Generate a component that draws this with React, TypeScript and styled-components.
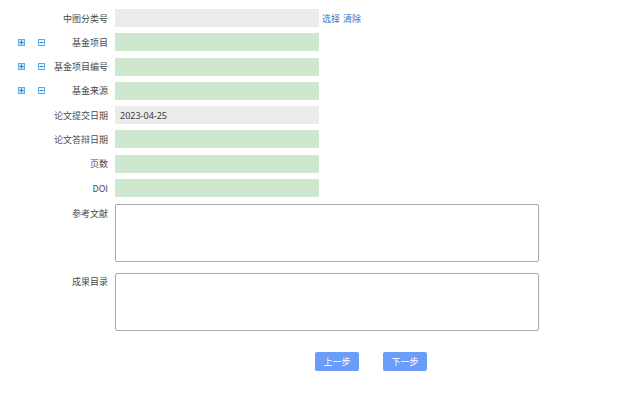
import React from "react";
import styled, { createGlobalStyle } from "styled-components";

const Global = createGlobalStyle`
  html, body { margin: 0; padding: 0; background: #fff; }
  body { font-family: "Noto Sans CJK SC", "Noto Sans", sans-serif; }
`;

const Page = styled.div`
  width: 638px;
  height: 397px;
  padding-top: 9px;
  box-sizing: border-box;
  display: flex;
  flex-direction: column;
`;

const Form = styled.div`
  display: flex;
  flex-direction: column;
  gap: 6.3px;
`;

const Row = styled.div<{ $top?: boolean; $gap?: number }>`
  display: grid;
  grid-template-columns: 108px auto;
  column-gap: 7px;
  align-items: ${(p) => (p.$top ? "start" : "center")};
  margin-top: ${(p) => p.$gap ?? 0}px;
`;

const LabelCell = styled.div`
  display: flex;
  align-items: center;
  justify-content: space-between;
  height: 18px;
`;

const Icons = styled.div`
  display: flex;
  align-items: center;
  gap: 13px;
  padding-left: 18px;
`;

const Label = styled.span`
  margin-left: auto;
  font-size: 9px;
  color: #4a4a4a;
  white-space: nowrap;
`;

const Field = styled.div<{ $tone: "gray" | "green" }>`
  width: 204px;
  height: 18px;
  box-sizing: border-box;
  background: ${(p) => (p.$tone === "gray" ? "#ebebeb" : "#cde8cf")};
  font-size: 9px;
  color: #3a3a3a;
  display: flex;
  align-items: center;
  padding-left: 5px;
  font-family: "Noto Sans", "Noto Sans CJK SC", sans-serif;
`;

const FieldLine = styled.div`
  display: flex;
  align-items: center;
  gap: 3px;
`;

const Links = styled.div`
  display: flex;
  gap: 3px;
  font-size: 9px;
  color: #2a76c6;
`;

const Area = styled.div`
  width: 424px;
  height: 58px;
  box-sizing: border-box;
  border: 1px solid #a9a9a9;
  border-radius: 2px;
  background: #fff;
`;

const ButtonBar = styled.div`
  display: flex;
  gap: 24px;
  padding-left: 315px;
  margin-top: 21px;
`;

const Btn = styled.button`
  width: 44px;
  height: 19px;
  border: none;
  border-radius: 2px;
  background: #6a9cf9;
  color: #fff;
  font-size: 9px;
  font-family: "Noto Sans CJK SC", sans-serif;
  padding: 0;
  display: flex;
  align-items: center;
  justify-content: center;
`;

const PlusIcon = () => (
  <svg width="7" height="7" viewBox="0 0 7 7">
    <rect x="0.5" y="0.5" width="6" height="6" fill="#c6e4fc" stroke="#5aaef0" />
    <path d="M1.5 3.5h4M3.5 1.5v4" stroke="#2a7fd0" strokeWidth="1" />
  </svg>
);

const MinusIcon = () => (
  <svg width="7" height="7" viewBox="0 0 7 7">
    <rect x="0.5" y="0.5" width="6" height="6" fill="#eef7ff" stroke="#5aaef0" />
    <path d="M1.5 3.5h4" stroke="#2a7fd0" strokeWidth="1" />
  </svg>
);

type R = { label: string; tone: "gray" | "green"; icons?: boolean; value?: string; links?: boolean };

const rows: R[] = [
  { label: "中图分类号", tone: "gray", links: true },
  { label: "基金项目", tone: "green", icons: true },
  { label: "基金项目编号", tone: "green", icons: true },
  { label: "基金来源", tone: "green", icons: true },
  { label: "论文提交日期", tone: "gray", value: "2023-04-25" },
  { label: "论文答辩日期", tone: "green" },
  { label: "页数", tone: "green" },
  { label: "DOI", tone: "green" },
];

export default function App() {
  return (
    <Page>
      <Global />
      <Form>
        {rows.map((r) => (
          <Row key={r.label}>
            <LabelCell>
              {r.icons && (
                <Icons>
                  <PlusIcon />
                  <MinusIcon />
                </Icons>
              )}
              <Label>{r.label}</Label>
            </LabelCell>
            <FieldLine>
              <Field $tone={r.tone}>{r.value}</Field>
              {r.links && (
                <Links>
                  <span>选择</span>
                  <span>清除</span>
                </Links>
              )}
            </FieldLine>
          </Row>
        ))}
        <Row $top $gap={1}>
          <LabelCell>
            <Label>参考文献</Label>
          </LabelCell>
          <Area />
        </Row>
        <Row $top $gap={4}>
          <LabelCell>
            <Label>成果目录</Label>
          </LabelCell>
          <Area />
        </Row>
      </Form>
      <ButtonBar>
        <Btn>上一步</Btn>
        <Btn>下一步</Btn>
      </ButtonBar>
    </Page>
  );
}
